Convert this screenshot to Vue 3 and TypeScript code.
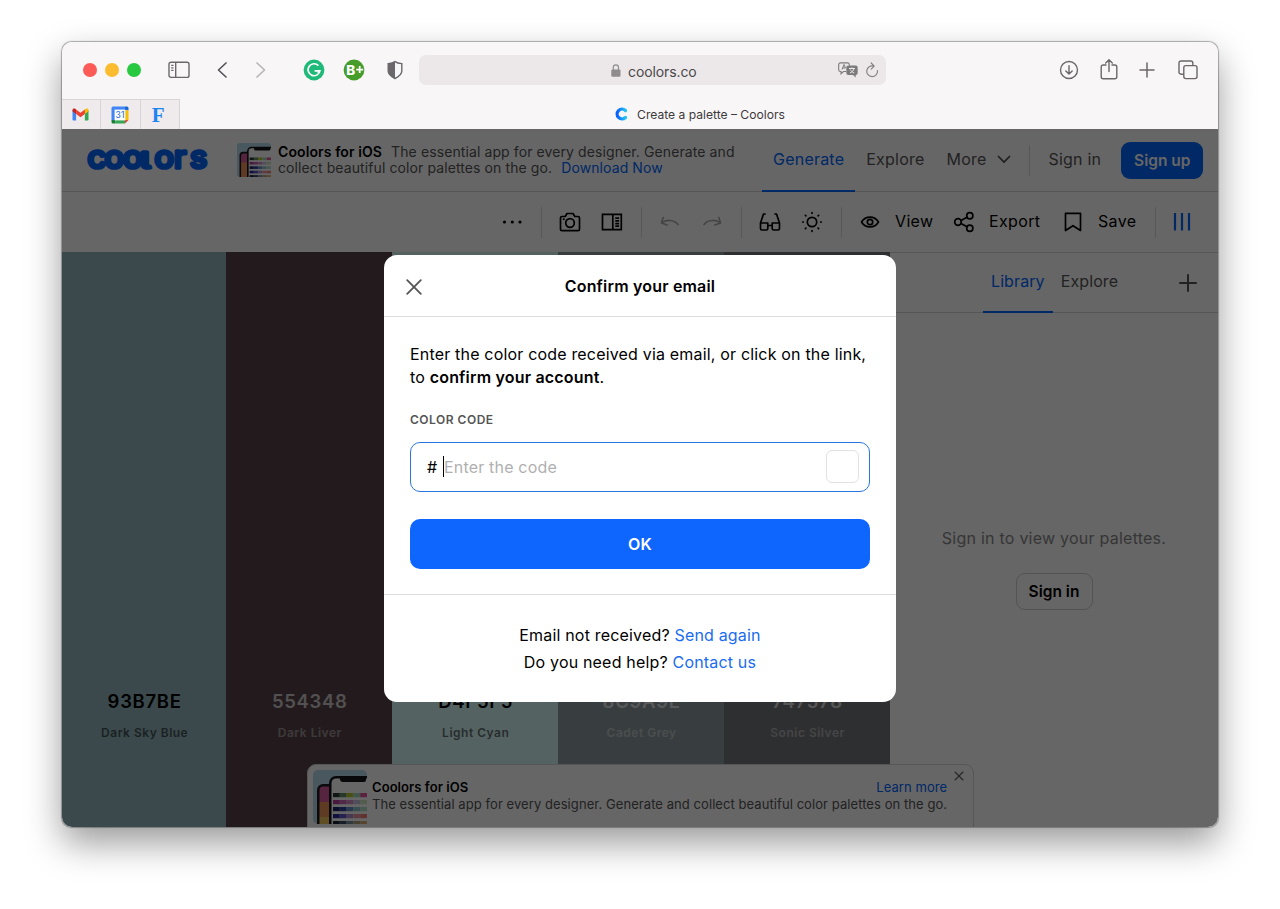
<script setup lang="ts">
import {ref} from "vue";

type color = {
  hex: string;
  name: string;
  light: boolean;
}
const colors = ref<color[]>([
  {hex: '93B7BE', name: 'Dark Sky Blue', light: false},
  {hex: '554348', name: 'Dark Liver', light: true},
  {hex: 'D4F5F5', name: 'Light Cyan', light: false},
  {hex: '8C9A9E', name: 'Cadet Grey', light: true},
  {hex: '747578', name: 'Sonic Silver', light: true},
]);
// palette rows drawn inside the phone thumbnail
const rows = [
  ['#2b3a35', '#5f8d63', '#b7c92f', '#9fd6b8', '#e0569b'],
  ['#b0409a', '#c964b4', '#d68ac8', '#c9c3e0', '#cfe8c0'],
  ['#1d2466', '#2b3f9e', '#5f8fc4', '#8fc4cf', '#b5e0c9'],
  ['#2f2a9e', '#6055c9', '#b58fd0', '#e895a0', '#f0807a'],
  ['#1d2133', '#3a4a66', '#7a90a0', '#b0a080', '#d8b070'],
];
const rowY = [23, 30, 37, 44, 51];
const code = ref('');
const onConfirm = () => {
  code.value = code.value.trim();
}
</script>

<template>
  <div class="desktop">
    <div class="window">
      <div class="chrome">
        <div class="bar">
          <div class="lights"><i class="red"></i><i class="yellow"></i><i class="green"></i></div>
          <svg class="i-side" width="22" height="18" viewBox="0 0 22 18" fill="none" stroke="#6b676a" stroke-width="1.4">
            <rect x="1" y="1.2" width="20" height="15.2" rx="2"/>
            <path d="M7.7 1.2v15.2M3.2 4.4h2.3M3.2 6.9h2.3M3.2 9.4h2.3"/>
          </svg>
          <svg class="i-back" width="12" height="18" viewBox="0 0 12 18" fill="none" stroke="#57545a" stroke-width="1.7" stroke-linecap="round" stroke-linejoin="round">
            <path d="M10 2L2.5 9l7.5 7"/>
          </svg>
          <svg class="i-fwd" width="12" height="18" viewBox="0 0 12 18" fill="none" stroke="#b9b5b7" stroke-width="1.7" stroke-linecap="round" stroke-linejoin="round">
            <path d="M2 2l7.5 7L2 16"/>
          </svg>
          <svg class="i-gram" width="22" height="22" viewBox="0 0 22 22">
            <circle cx="11" cy="11" r="10.4" fill="#1fb978"/>
            <path d="M15.4 6.6A6 6 0 1 0 17 11.5M11.6 11.8h5l-1.6 2.4" fill="none" stroke="#fff" stroke-width="1.7"/>
          </svg>
          <svg class="i-bplus" width="22" height="22" viewBox="0 0 22 22">
            <circle cx="11" cy="11" r="10.4" fill="#479d2c"/>
            <text x="3.2" y="15.9" fill="#fff" font-family="Inter, sans-serif" font-weight="800" font-size="13.5">B</text>
            <path d="M13.2 10.6h7M16.7 7.1v7" stroke="#fff" stroke-width="1.8"/>
          </svg>
          <svg class="i-shield" width="16" height="20" viewBox="0 0 16 20">
            <path d="M8 1.6C6.3 2.8 3.8 3.4 1.2 3.6V11c0 3.4 3 5.6 6.8 7.5 3.8-1.9 6.8-4.1 6.8-7.5V3.6C12.2 3.4 9.7 2.8 8 1.6z" fill="none" stroke="#6b676a" stroke-width="1.4"/>
            <path d="M8 1.6C6.3 2.8 3.8 3.4 1.2 3.6V11c0 3.4 3 5.6 6.8 7.5z" fill="#6b676a"/>
          </svg>
          <div class="address">
            <svg width="10" height="13" viewBox="0 0 10 13">
              <rect x="0.3" y="5.5" width="9.2" height="7.2" rx="1.2" fill="#8f8c8e"/>
              <path d="M2.3 6V3.5a2.6 2.6 0 0 1 5.2 0V6" fill="none" stroke="#8f8c8e" stroke-width="1.2"/>
            </svg>
            <span>coolors.co</span>
            <svg class="i-trans" width="20" height="16" viewBox="0 0 20 16">
              <path d="M8 9.5H5.5L3 11.8V9.5H2.5A1.8 1.8 0 0 1 .7 7.7v-5A1.8 1.8 0 0 1 2.5.9h7a1.8 1.8 0 0 1 1.8 1.8v.8" fill="none" stroke="#7d7a7c" stroke-width="1.1"/>
              <path d="M4 7.5l2-5 1.6 3.7M4.7 6h2.6" fill="none" stroke="#7d7a7c" stroke-width="1"/>
              <path d="M10.3 3.6h7.4a2 2 0 0 1 2 2v5.4a2 2 0 0 1-2 2v2.4L15 13h-4.7a2 2 0 0 1-2-2V5.6a2 2 0 0 1 2-2z" fill="#7d7a7c"/>
              <path d="M11 6.5h6M14 5.3v1.2M12 11c2.2-1 3.5-2.6 4-4.4M12.2 7.5c.8 1.5 2.3 2.8 4 3.5" fill="none" stroke="#ece9eb" stroke-width="1"/>
            </svg>
            <svg class="i-reload" width="14" height="16" viewBox="0 0 14 16" fill="none" stroke="#858284" stroke-width="1.2" stroke-linecap="round" stroke-linejoin="round">
              <path d="M8.5 4A5.4 5.4 0 1 0 12.5 8.7M6.2 1l3 3.1-3 3"/>
            </svg>
          </div>
          <svg class="i-down" width="20" height="20" viewBox="0 0 20 20" fill="none" stroke="#6b676a" stroke-width="1.4" stroke-linecap="round" stroke-linejoin="round">
            <circle cx="10" cy="10" r="8.5"/><path d="M10 5.8v8M6.8 10.9l3.2 3.2 3.2-3.2"/>
          </svg>
          <svg class="i-share" width="18" height="22" viewBox="0 0 18 22" fill="none" stroke="#6b676a" stroke-width="1.4" stroke-linecap="round" stroke-linejoin="round">
            <path d="M6 6H3.2A2 2 0 0 0 1.2 8v9.8a2 2 0 0 0 2 2h11.6a2 2 0 0 0 2-2V8a2 2 0 0 0-2-2H12M9 12.5V.9M5.7 4L9 .8 12.3 4"/>
          </svg>
          <svg class="i-plus" width="16" height="16" viewBox="0 0 16 16" stroke="#6b676a" stroke-width="1.5" stroke-linecap="round">
            <path d="M8 1v14M1 8h14"/>
          </svg>
          <svg class="i-tabs" width="20" height="20" viewBox="0 0 20 20" fill="none" stroke="#6b676a" stroke-width="1.4">
            <rect x="5.8" y="5.6" width="13.2" height="13" rx="2"/>
            <path d="M5.8 14.2H3a2 2 0 0 1-2-2V3a2 2 0 0 1 2-2h9.8a2 2 0 0 1 2 2v2.6"/>
          </svg>
        </div>
        <div class="tabs">
          <div class="pin">
            <svg width="17" height="13" viewBox="0 0 17 13">
              <path d="M.5 2v9.5a1 1 0 0 0 1 1h2.6V5.3z" fill="#4285f4"/>
              <path d="M16.5 2v9.5a1 1 0 0 1-1 1h-2.6V5.3z" fill="#34a853"/>
              <path d="M12.9 1.5v4.4l3.6-2.7V2c0-1.5-1.7-2-2.7-1.2z" fill="#fbbc04"/>
              <path d="M.5 2v1.2l3.6 2.7V1.5L3.2.8C2.2 0 .5.5.5 2z" fill="#c5221f"/>
              <path d="M4.1 1.5v4.4l4.4 3.3 4.4-3.3V1.5L8.5 4.8z" fill="#ea4335"/>
            </svg>
          </div>
          <div class="pin">
            <svg width="18" height="18" viewBox="0 0 18 18">
              <path d="M2 .5h12v3.8H4.3V14H.5V2A1.5 1.5 0 0 1 2 .5z" fill="#4285f4"/>
              <path d="M14 .5h2A1.5 1.5 0 0 1 17.5 2v2.3H14z" fill="#1967d2"/>
              <path d="M14 4.3h3.5V14H14z" fill="#fbbc04"/>
              <path d="M4.3 14H14v3.5H4.3z" fill="#34a853"/>
              <path d="M.5 14h3.8v3.5H2A1.5 1.5 0 0 1 .5 16z" fill="#188038"/>
              <path d="M14 14h3.5L14 17.5z" fill="#ea4335"/>
              <rect x="3.6" y="3.6" width="10.8" height="10.8" fill="#fff"/>
              <text x="9" y="12.2" text-anchor="middle" fill="#3273e0" font-family="Inter, sans-serif" font-weight="500" font-size="8.5">31</text>
            </svg>
          </div>
          <div class="pin"><b>F</b></div>
          <div class="tab">
            <svg width="14" height="14" viewBox="0 0 14 14">
              <defs>
                <linearGradient id="cg" x1="0" x2="1"><stop offset="0" stop-color="#0a5fff"/><stop offset="1" stop-color="#25c4f5"/></linearGradient>
              </defs>
              <path d="M10.5 3.5a4.9 4.9 0 1 0 0 7" fill="none" stroke="url(#cg)" stroke-width="3.3" stroke-linecap="round"/>
            </svg>
            <span>Create a palette – Coolors</span>
          </div>
        </div>
      </div>

      <div class="page">
        <header class="header">
          <svg class="logo" width="124" height="44" viewBox="0 -9 124 44" fill="#0066ff" stroke="#0066ff" stroke-width="3.7" stroke-linejoin="round" font-family="Inter, sans-serif" font-weight="400" font-size="30">
            <g transform="scale(1.08 1)">
              <text y="21.3" x="0.5 16.3 33.3">coo</text>
              <text class="tail" transform="translate(49.8 21.3) scale(1.4 1)" font-size="22">l</text>
              <text y="21.3" x="62.6 80.6 95.4">ors</text>
            </g>
          </svg>
          <div class="promo">
            <svg class="thumb" width="34" height="34" viewBox="0 0 54 54">
              <rect width="54" height="54" rx="5" fill="#b5dcec"/>
              <path d="M4 54V20a6 6 0 0 1 6-6h8v40z" fill="#1a1a1f"/>
              <path d="M6.5 54V20a3.5 3.5 0 0 1 3.5-3.5h6V32H6.5z" fill="#d65a9c"/>
              <path d="M6.5 31H16v23H6.5z" fill="#f0955a"/>
              <path d="M16 54V13a7 7 0 0 1 7-7h31v48z" fill="#15151a"/>
              <path d="M18.5 54V13a4.5 4.5 0 0 1 4.5-4.5h31V54z" fill="#fff"/>
              <path d="M27 8h26v2a2 2 0 0 1-2 2H30a3 3 0 0 1-3-3z" fill="#15151a"/>
              <template v-for="(r,i) in rows" :key="i">
                <rect v-for="(c,j) in r" :key="j" :x="20 + j * 6.8" :y="rowY[i]" width="6.8" height="4.2" :fill="c"/>
              </template>
            </svg>
            <p>
              <b>Coolors for iOS</b><span class="gap"></span>The essential app for every designer. Generate and<br>
              collect beautiful color palettes on the go.<span class="gap"></span><a>Download Now</a>
            </p>
          </div>
          <nav class="nav">
            <a class="active">Generate</a>
            <a>Explore</a>
            <a class="more">More
              <svg width="14" height="9" viewBox="0 0 14 9" fill="none" stroke="#555" stroke-width="1.8" stroke-linecap="round" stroke-linejoin="round"><path d="M1.5 1.5L7 7.2l5.5-5.7"/></svg>
            </a>
            <i class="line"></i>
            <a class="signin">Sign in</a>
            <button class="signup">Sign up</button>
          </nav>
        </header>

        <div class="toolbar">
          <span class="slot">
            <svg width="20" height="4" viewBox="0 0 20 4"><circle cx="2.5" cy="2" r="1.6"/><circle cx="10.3" cy="2" r="1.6"/><circle cx="18" cy="2" r="1.6"/></svg>
          </span>
          <i class="sep"></i>
          <span class="slot">
            <svg class="st" width="22" height="20" viewBox="0 0 22 20">
              <path d="M3 4.5h3.2L8 1.5h6l1.800 3H19a1.500 1.500 0 0 1 1.500 1.500v11.200a1.500 1.500 0 0 1-1.500 1.500H3a1.500 1.500 0 0 1-1.500-1.500V6A1.500 1.500 0 0 1 3 4.500z"/>
              <circle cx="11" cy="11" r="4.3"/>
              <path d="M4.6 7.2h.4"/>
            </svg>
          </span>
          <span class="slot">
            <svg class="st sharp" width="22" height="18" viewBox="0 0 22 18">
              <path d="M1.5 1.3h18.8v15.4H1.5zM11.8 1.3v15.4M14.3 5.2h3.8M14.3 7.9h3.8M14.3 10.6h3.8M14.3 13.2h3.8"/>
            </svg>
          </span>
          <i class="sep"></i>
          <span class="slot">
            <svg class="st dim" width="20" height="12" viewBox="0 0 20 12"><path d="M1.5 6.8C6 3.3 14 3.5 18 8.5M3.2 1.5L1.5 7l5.7 2"/></svg>
          </span>
          <span class="slot">
            <svg class="st dim" width="20" height="12" viewBox="0 0 20 12"><path d="M18.5 6.8C14 3.3 6 3.5 2 8.5M16.8 1.5L18.5 7l-5.7 2"/></svg>
          </span>
          <i class="sep"></i>
          <span class="slot">
            <svg class="st" width="22" height="20" viewBox="0 0 22 20">
              <path d="M6 2H4.5L1.5 11v5.5a1.5 1.5 0 0 0 1.5 1.5h4.3a1.5 1.5 0 0 0 1.5-1.5V11H1.5M16 2h1.5l3 9v5.5a1.5 1.5 0 0 1-1.5 1.5h-4.3a1.5 1.5 0 0 1-1.5-1.5V11h7.3M8.8 13.5h4.4"/>
            </svg>
          </span>
          <span class="slot">
            <svg class="st" width="22" height="22" viewBox="0 0 22 22">
              <circle cx="11" cy="11" r="4.7"/>
              <path d="M11 1.7v.6M11 19.7v.6M1.7 11h.6M19.7 11h.6M4.4 4.4l.5.5M17.1 17.1l.5.5M4.4 17.6l.5-.5M17.1 4.9l.5-.5"/>
            </svg>
          </span>
          <i class="sep"></i>
          <span class="tool view">
            <span class="slot">
              <svg class="st" width="20" height="14" viewBox="0 0 20 14"><path d="M1.5 7C5.5.4 14.5.4 18.5 7 14.5 13.6 5.5 13.6 1.5 7z"/><circle cx="10" cy="7" r="2.7"/></svg>
            </span>View
          </span>
          <span class="tool export">
            <span class="slot">
              <svg class="st" width="22" height="22" viewBox="0 0 22 22"><circle cx="5" cy="11" r="3.3"/><circle cx="16.8" cy="4.7" r="3.1"/><circle cx="16.8" cy="17.3" r="3.1"/><path d="M8 9.5l6-3.3M8 12.5l6 3.3"/></svg>
            </span>Export
          </span>
          <span class="tool save">
            <span class="slot">
              <svg class="st" width="18" height="20" viewBox="0 0 18 20"><path d="M1.5 1.3h15v17.2L9 13.7l-7.5 4.8z"/></svg>
            </span>Save
          </span>
          <i class="sep"></i>
          <span class="slot bars">
            <svg width="18" height="20" viewBox="0 0 18 20" stroke="#0066ff" stroke-width="2.2"><path d="M2 1v17.5M9 1v17.5M16 1v17.5"/></svg>
          </span>
        </div>

        <div class="body">
          <div class="palette">
            <div v-for="c in colors" :key="c.hex" class="color" :class="{ light: c.light }" :style="{ background: '#' + c.hex }">
              <strong>{{ c.hex }}</strong>
              <span>{{ c.name }}</span>
            </div>
          </div>
          <aside class="side">
            <div class="side-head">
              <a class="active">Library</a>
              <a>Explore</a>
              <svg width="18" height="18" viewBox="0 0 18 18" stroke="#555" stroke-width="2" stroke-linecap="round"><path d="M9 1v16M1 9h16"/></svg>
            </div>
            <div class="side-body">
              <p>Sign in to view your palettes.</p>
              <button>Sign in</button>
            </div>
          </aside>
        </div>

        <div class="banner">
          <svg class="thumb" width="54" height="54" viewBox="0 0 54 54">
            <rect width="54" height="54" rx="5" fill="#b5dcec"/>
            <path d="M4 54V20a6 6 0 0 1 6-6h8v40z" fill="#1a1a1f"/>
            <path d="M6.5 54V20a3.5 3.5 0 0 1 3.5-3.5h6V32H6.5z" fill="#d65a9c"/>
            <path d="M6.5 32H16v15H6.5z" fill="#f0955a"/>
            <path d="M6.5 47H16v7H6.5z" fill="#f0c25a"/>
            <path d="M16 54V13a7 7 0 0 1 7-7h31v48z" fill="#15151a"/>
            <path d="M18.5 54V13a4.5 4.5 0 0 1 4.5-4.5h31V54z" fill="#fff"/>
            <path d="M27 8h26v2a2 2 0 0 1-2 2H30a3 3 0 0 1-3-3z" fill="#15151a"/>
            <template v-for="(r,i) in rows" :key="i">
              <rect v-for="(c,j) in r" :key="j" :x="20 + j * 6.8" :y="rowY[i]" width="6.8" height="4.2" :fill="c"/>
            </template>
          </svg>
          <div class="banner-text">
            <div class="banner-top"><b>Coolors for iOS</b><a>Learn more</a></div>
            <div>The essential app for every designer. Generate and collect beautiful color palettes on the go.</div>
          </div>
          <svg class="banner-close" width="10" height="10" viewBox="0 0 10 10" stroke="#666" stroke-width="1.3"><path d="M.8.8l8.4 8.4M9.2.8L.8 9.2"/></svg>
        </div>

        <div class="overlay">
          <div class="modal">
            <div class="modal-head">
              <svg width="16" height="16" viewBox="0 0 16 16" stroke="#555" stroke-width="1.8" stroke-linecap="round"><path d="M1.2 1.2l13.6 13.6M14.8 1.2L1.2 14.8"/></svg>
              <h1>Confirm your email</h1>
            </div>
            <div class="modal-body">
              <p>Enter the color code received via email, or click on the link,<br>to <b>confirm your account</b>.</p>
              <label>COLOR CODE</label>
              <div class="field">
                <span class="hash">#</span>
                <i class="caret"></i>
                <input type="text" v-model="code" placeholder="Enter the code">
                <span class="swatch"></span>
              </div>
              <button class="ok" @click="onConfirm">OK</button>
            </div>
            <div class="modal-foot">
              <div>Email not received? <a>Send again</a></div>
              <div>Do you need help? <a>Contact us</a></div>
            </div>
          </div>
        </div>
      </div>
    </div>
  </div>
</template>

<style>
body {
  margin: 0;
  background: #fff;
}
</style>

<style scoped>
* {
  box-sizing: border-box;
}

.desktop {
  height: 909px;
  padding: 42px 62px;
  overflow: hidden;
  background: #fff;
  font-family: Inter, "Liberation Sans", sans-serif;
  font-size: 16px;
}

.window {
  width: 1156px;
  height: 785px;
  border-radius: 10px;
  overflow: hidden;
  display: flex;
  flex-direction: column;
  box-shadow: 0 0 1px 0.5px rgba(0, 0, 0, 0.3), 0 16px 36px rgba(0, 0, 0, 0.4);
}

.window svg {
  display: block;
  flex: none;
}

button {
  font: inherit;
  letter-spacing: inherit;
  border: 0;
  padding: 0;
}

p, h1 {
  margin: 0;
}

b {
  font-weight: 600;
}

/* browser chrome */
.chrome {
  height: 87px;
  flex: none;
  background: #f9f6f7;
}

.bar {
  height: 57px;
  display: flex;
  align-items: center;
  padding: 0 0 1px 21px;
}

.lights {
  display: flex;
  gap: 8px;
  width: 85px;
}

.lights i {
  width: 14px;
  height: 14px;
  border-radius: 50%;
}

.red {
  background: #fc5b57;
}

.yellow {
  background: #fcbc2f;
}

.green {
  background: #28c840;
}

.i-back {
  margin-left: 26px;
}

.i-fwd {
  margin-left: 27px;
}

.i-gram {
  margin-left: 35.5px;
}

.i-bplus {
  margin-left: 18.5px;
}

.i-shield {
  margin-left: 21.5px;
}

.address {
  width: 466.5px;
  height: 30px;
  margin-left: 16.5px;
  padding-left: 192px;
  border-radius: 7px;
  background: #ece8e9;
  display: flex;
  align-items: center;
  color: #4a474a;
  font-size: 14px;
}

.address span {
  margin-left: 7px;
  width: 210px;
  letter-spacing: -0.1px;
  padding-top: 2px;
}

.i-reload {
  margin-left: 7px;
}

.i-down {
  margin-left: 173px;
}

.i-share {
  margin-left: 21px;
}

.i-plus {
  margin-left: 21px;
}

.i-tabs {
  margin-left: 23px;
}

.tabs {
  height: 30px;
  display: flex;
}

.pin {
  width: 39.3px;
  flex: none;
  border: 1px solid #d9d5d6;
  border-width: 1px 1px 0 0;
  background: #efebec;
  display: flex;
  align-items: center;
  justify-content: center;
}

.pin svg {
  margin-right: 1px;
}

.pin b {
  color: #1e84f0;
  font-family: "Liberation Serif", serif;
  font-weight: 700;
  font-size: 21px;
  line-height: 20px;
  padding-right: 3px;
}

.tab {
  flex: 1;
  display: flex;
  align-items: center;
  justify-content: center;
  gap: 8px;
  padding-left: 2px;
  font-size: 12.1px;
  color: #3d3a3c;
}

/* web page */
.page {
  flex: 1;
  position: relative;
  display: flex;
  flex-direction: column;
  overflow: hidden;
  background: #fff;
}

.header {
  height: 63px;
  flex: none;
  display: flex;
  align-items: center;
  border-bottom: 1px solid #d8d8d8;
  padding-left: 25px;
}

.logo .tail {
  font-feature-settings: "cv05";
}

.promo {
  display: flex;
  width: 525px;
  margin-left: 26px;
  align-items: center;
}

.promo p {
  margin-left: 7px;
  font-size: 14px;
  line-height: 16px;
  letter-spacing: 0.1px;
  color: #555;
  white-space: nowrap;
}

.promo b, .banner b {
  color: #000;
}

.gap {
  display: inline-block;
  width: 9px;
}

a {
  color: #0066ff;
}

.nav {
  height: 63px;
  display: flex;
  align-items: center;
  color: #555;
  letter-spacing: 0.22px;
}

.nav a, .side-head a {
  color: #555;
  height: 100%;
  display: flex;
  align-items: center;
  padding: 0 11px;
  border-bottom: 2px solid transparent;
  white-space: nowrap;
}

.nav a.active, .side-head a.active {
  color: #0066ff;
  border-bottom-color: #0066ff;
}

.nav .more {
  gap: 10px;
  padding-right: 18px;
}

.line {
  width: 1px;
  height: 31px;
  background: #ddd;
}

.nav .signin {
  padding: 0 20px 0 19px;
}

.signup {
  width: 82px;
  height: 37px;
  border-radius: 9px;
  background: #0066ff;
  color: #fff;
  font-size: 15.5px;
  font-weight: 600;
  letter-spacing: 0;
}

.toolbar {
  height: 60px;
  flex: none;
  display: flex;
  align-items: center;
  justify-content: flex-end;
  padding-right: 17px;
}

.slot {
  width: 42px;
  height: 60px;
  flex: none;
  display: flex;
  align-items: center;
  justify-content: center;
}

.bars {
  width: 38px;
}

.sep {
  width: 1px;
  height: 31px;
  margin: 0 7px 0 8px;
  background: #ddd;
}

.st {
  fill: none;
  stroke: #000;
  stroke-width: 1.7;
  stroke-linecap: round;
  stroke-linejoin: round;
}

.sharp {
  stroke-linejoin: miter;
  stroke-linecap: butt;
}

.dim {
  stroke: #aaa;
  stroke-width: 1.6;
}

.tool {
  display: flex;
  align-items: center;
  line-height: 58px;
  height: 60px;
  padding-bottom: 2px;
  letter-spacing: 0.35px;
}

.tool .slot {
  margin: 2px 4px 0 0;
}

.view {
  width: 94px;
}

.export {
  width: 109px;
}

.save {
  width: 95px;
}

.body {
  flex: 1;
  display: flex;
}

.palette {
  width: 828px;
  display: flex;
}

.color {
  flex: 1;
  display: flex;
  flex-direction: column;
  align-items: center;
  padding: 436px 0 0 1px;
  color: #000;
}

.color:first-child {
  flex: 0 0 164.3px;
}

.color strong {
  font-size: 18.5px;
  line-height: 26px;
  font-weight: 600;
  letter-spacing: 0.7px;
}

.color span {
  margin-top: 11px;
  font-size: 12px;
  line-height: 16px;
  font-weight: 600;
  letter-spacing: 0.5px;
  opacity: 0.55;
}

.light {
  color: #fff;
}

.light strong {
  opacity: 0.7;
}

.light span {
  opacity: 0.4;
}

.side {
  flex: 1;
  border-top: 1px solid #d8d8d8;
  display: flex;
  flex-direction: column;
  letter-spacing: 0.1px;
}

.side-head {
  height: 60px;
  display: flex;
  align-items: center;
  padding: 0 21px 0 93px;
  border-bottom: 1px solid #d8d8d8;
}

.side-head a {
  height: 60px;
  padding: 0 8px 2px;
}

.side-head svg {
  margin-left: auto;
}

.side-body {
  flex: 1;
  display: flex;
  flex-direction: column;
  align-items: center;
  justify-content: center;
  gap: 25px;
  padding-bottom: 3px;
  color: #888;
}

.side-body p {
  letter-spacing: 0.24px;
}

.side-body button {
  width: 77px;
  height: 37px;
  border: 1px solid #d0d0d0;
  border-radius: 9px;
  background: #fff;
  font-size: 15.5px;
  font-weight: 600;
  letter-spacing: 0;
  color: #000;
}

.banner {
  position: absolute;
  left: 245px;
  bottom: -2px;
  width: 667px;
  height: 65px;
  display: flex;
  padding: 5px 26px 0 5px;
  border: 1px solid #d8d8d8;
  border-radius: 9px 9px 0 0;
  background: #fff;
  color: #555;
  font-size: 13px;
  line-height: 17px;
  letter-spacing: 0.07px;
}

.banner-text {
  flex: 1;
  margin-left: 5px;
  padding-top: 9px;
  white-space: nowrap;
}

.banner-top {
  display: flex;
  justify-content: space-between;
}

.banner-close {
  position: absolute;
  top: 6px;
  right: 9px;
}

.overlay {
  position: absolute;
  inset: 0;
  display: flex;
  align-items: center;
  justify-content: center;
  background: rgba(0, 0, 0, 0.6);
}

.modal {
  width: 512px;
  height: 447px;
  border-radius: 13px;
  background: #fff;
  color: #000;
  letter-spacing: 0.18px;
}

.modal-head {
  height: 62px;
  display: flex;
  align-items: center;
  padding: 3px 22px 0;
  border-bottom: 1px solid #ddd;
}

.modal-head h1 {
  flex: 1;
  padding: 0 16px 2px 0;
  text-align: center;
  font-size: 16px;
  font-weight: 600;
}

.modal-body {
  height: 278px;
  padding: 26px 26px 0;
  border-bottom: 1px solid #ddd;
}

.modal-body p {
  line-height: 23px;
  white-space: nowrap;
}

.modal-body label {
  display: block;
  margin-top: 23px;
  font-size: 12px;
  line-height: 16px;
  font-weight: 600;
  letter-spacing: 0.5px;
  color: #555;
}

.field {
  height: 50px;
  margin-top: 14px;
  padding: 0 10px 0 16px;
  border: 1.5px solid #2a76e0;
  border-radius: 10px;
  display: flex;
  align-items: center;
}

.hash {
  width: 16px;
}

.caret {
  width: 1px;
  height: 21px;
  background: #000;
}

.field input {
  flex: 1;
  min-width: 0;
  padding: 0;
  border: 0;
  outline: 0;
  font: inherit;
  letter-spacing: inherit;
}

.field input::placeholder {
  color: #b0b0b0;
}

.swatch {
  width: 33px;
  height: 33px;
  border: 1px solid #e2e2e2;
  border-radius: 6px;
}

.ok {
  display: block;
  width: 100%;
  height: 50px;
  margin-top: 27px;
  border-radius: 10px;
  background: #0f66ff;
  color: #fff;
  font-weight: 600;
}

.modal-foot {
  padding-top: 27px;
  text-align: center;
  line-height: 27.5px;
}

.modal-foot a {
  color: #1a6cf0;
}
</style>
